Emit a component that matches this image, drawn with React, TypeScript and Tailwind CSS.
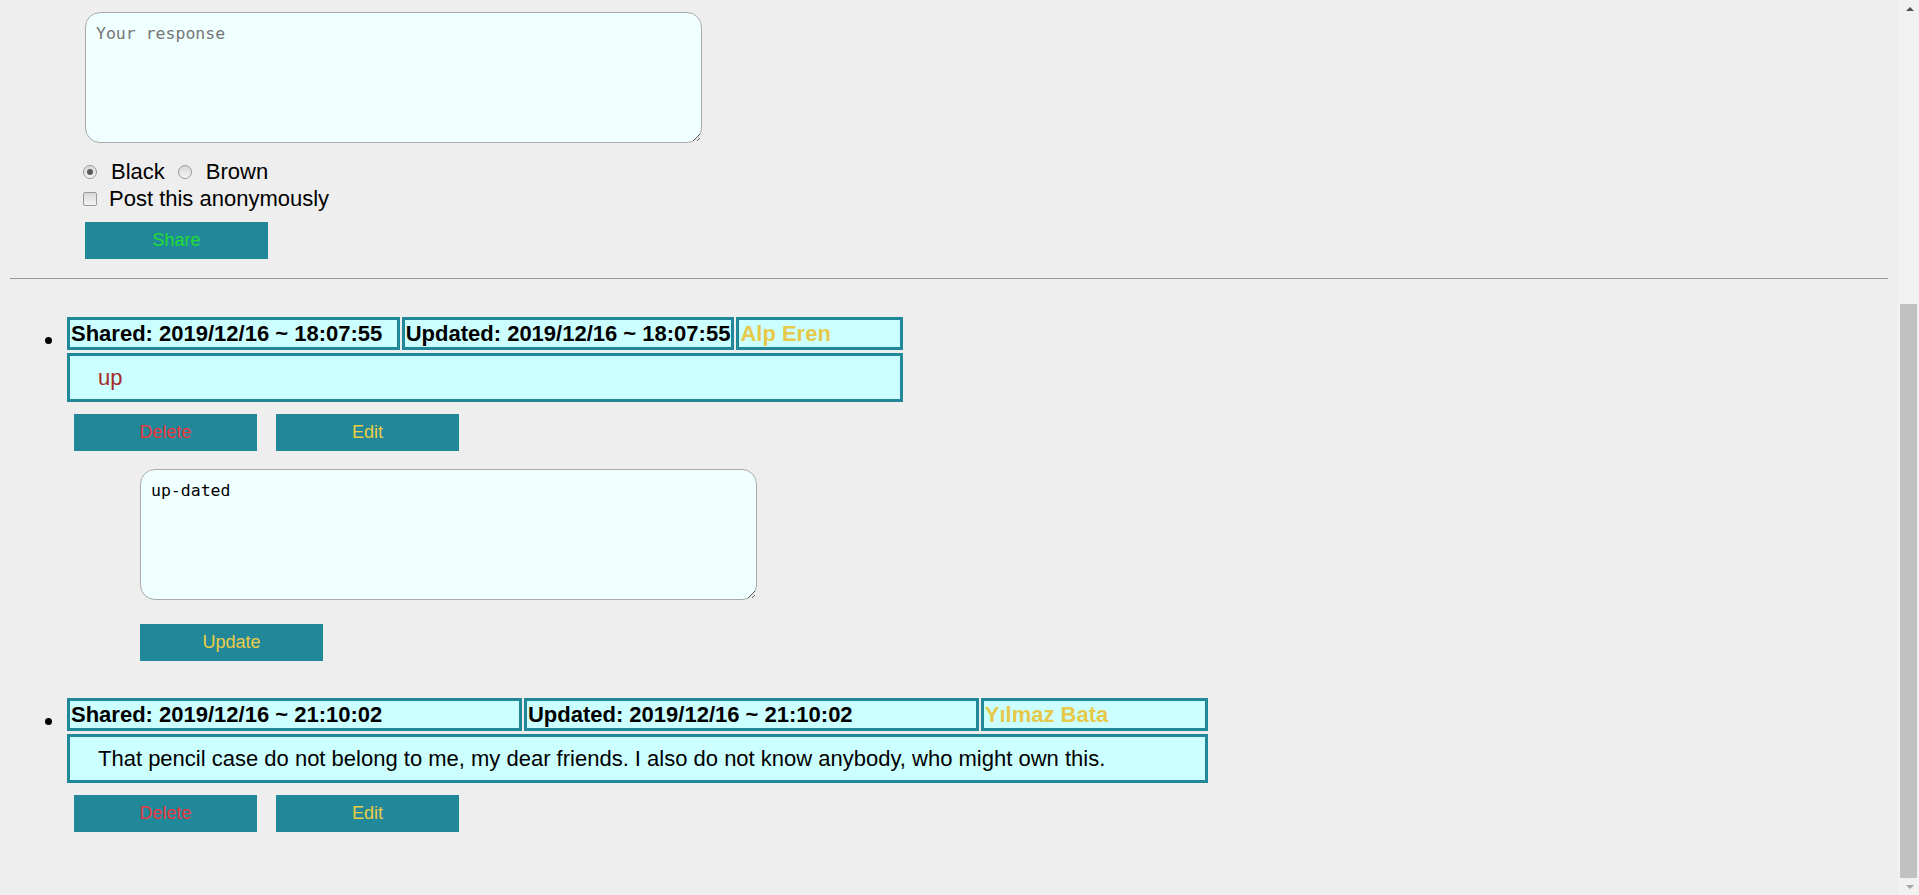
import React from "react";

interface Post {
  shared: string;
  updated: string;
  author: string;
  text: string;
  color: string;
  editing?: string;
}

const posts: Post[] = [
  {
    shared: "2019/12/16 ~ 18:07:55",
    updated: "2019/12/16 ~ 18:07:55",
    author: "Alp Eren",
    text: "up",
    color: "text-[#a52a2a]",
    editing: "up-dated",
  },
  {
    shared: "2019/12/16 ~ 21:10:02",
    updated: "2019/12/16 ~ 21:10:02",
    author: "Yılmaz Bata",
    text: "That pencil case do not belong to me, my dear friends. I also do not know anybody, who might own this.",
    color: "text-black",
  },
];

function TealButton({ label, color }: { label: string; color: string }) {
  return (
    <button
      type="button"
      className={`w-[183px] h-[37px] border-0 bg-[#21889a] text-[18px] ${color}`}
    >
      {label}
    </button>
  );
}

function Radio({ checked }: { checked?: boolean }) {
  return (
    <span className="w-[14px] h-[14px] rounded-full border border-[#9a9a9a] bg-gradient-to-b from-[#d8d8d8] to-[#f4f4f4] flex items-center justify-center shrink-0">
      {checked && <span className="w-[6px] h-[6px] rounded-full bg-[#5a5a5a]" />}
    </span>
  );
}

function ResponseBox({ value, placeholder }: { value?: string; placeholder?: string }) {
  return (
    <textarea
      readOnly
      defaultValue={value}
      placeholder={placeholder}
      className="block box-border w-[617px] h-[131px] rounded-[15px] border border-[#a9a9a9] bg-[#f0ffff] px-[10px] pt-[11px] pb-[9px] font-['DejaVu_Sans_Mono',monospace] text-[16.5px] leading-[20px] text-black placeholder:text-[#757575] outline-none resize"
    />
  );
}

function PostItem({ post }: { post: Post }) {
  return (
    <li>
      <table className="border-separate border-spacing-x-[2px] border-spacing-y-[3px]">
        <tbody>
          <tr>
            <th className="w-[40%] border-[3px] border-[#21889a] bg-[#ccffff] px-[1px] py-0 text-left font-bold leading-[27px] whitespace-nowrap">
              Shared: {post.shared}
            </th>
            <th className="w-[40%] border-[3px] border-[#21889a] bg-[#ccffff] px-[1px] py-0 text-left font-bold leading-[27px] whitespace-nowrap">
              Updated: {post.updated}
            </th>
            <th className="w-[20%] border-[3px] border-[#21889a] bg-[#ccffff] px-[1px] py-0 text-left font-bold leading-[27px] whitespace-nowrap text-[#e6c84a]">
              {post.author}
            </th>
          </tr>
          <tr>
            <td
              colSpan={3}
              className={`border-[3px] border-[#21889a] bg-[#ccffff] pl-[28px] pr-[100px] py-[9px] leading-[25px] whitespace-nowrap ${post.color}`}
            >
              {post.text}
            </td>
          </tr>
        </tbody>
      </table>
      <div className="flex gap-[19px] ml-[9px] mt-[9px]">
        <TealButton label="Delete" color="text-[#e8383d]" />
        <TealButton label="Edit" color="text-[#eccc44]" />
      </div>
      {post.editing && (
        <div className="ml-[75px] mt-[18px]">
          <ResponseBox value={post.editing} />
          <div className="mt-[24px]">
            <TealButton label="Update" color="text-[#eccc44]" />
          </div>
        </div>
      )}
    </li>
  );
}

function Scrollbar() {
  return (
    <div className="w-[21px] shrink-0 bg-[#f1f1f1] flex flex-col">
      <div className="h-[17px] flex items-center justify-center pl-[2px]">
        <span className="w-0 h-0 border-x-[4px] border-x-transparent border-b-[4px] border-b-[#505050]" />
      </div>
      <div className="h-[287px]" />
      <div className="h-[574px] ml-[2px] w-[17px] bg-[#c1c1c1]" />
      <div className="h-[17px] flex items-center justify-center pl-[2px]">
        <span className="w-0 h-0 border-x-[4px] border-x-transparent border-t-[4px] border-t-[#a3a3a3]" />
      </div>
    </div>
  );
}

export default function App() {
  return (
    <div className="flex h-[895px] overflow-hidden bg-[#eeeeee] font-['Liberation_Sans',Arial,sans-serif] text-[22px] text-black">
      <div className="flex-1 min-w-0">
        {/* Response form */}
        <div className="pt-[12px] pl-[85px]">
          <ResponseBox placeholder="Your response" />
          <div className="flex items-center h-[27px] mt-[15px] -ml-[2px]">
            <Radio checked />
            <span className="ml-[14px]">Black</span>
            <span className="ml-[13px]">
              <Radio />
            </span>
            <span className="ml-[14px]">Brown</span>
          </div>
          <div className="flex items-center h-[27px] -ml-[2px]">
            <span className="w-[14px] h-[14px] rounded-[2px] border border-[#9a9a9a] bg-gradient-to-b from-[#d8d8d8] to-[#f4f4f4] shrink-0" />
            <span className="ml-[12px]">Post this anonymously</span>
          </div>
          <div className="mt-[10px]">
            <TealButton label="Share" color="text-[#22dd33]" />
          </div>
        </div>

        <hr className="mx-[10px] mt-[19px] border-0 border-t border-[#9a9a9a]" />

        {/* Posts */}
        <ul className="list-disc pl-[65px] mt-[35px] flex flex-col gap-[34px]">
          {posts.map((p) => (
            <PostItem key={p.shared} post={p} />
          ))}
        </ul>
      </div>
      <Scrollbar />
    </div>
  );
}
